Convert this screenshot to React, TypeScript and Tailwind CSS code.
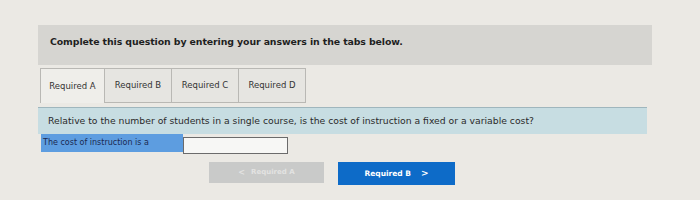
export default function App() {
  const tabs = ["Required A", "Required B", "Required C", "Required D"]
  return (
    <div className="h-[200px] w-[700px] overflow-hidden bg-[#ebe9e4] pt-[25px] font-['DejaVu_Sans',sans-serif] text-[#2b2b2b]">
      <div className="ml-[38px] h-[40px] w-[614px] bg-[#d6d5d1] pl-[12px] pt-[10px]">
        <p className="text-[9.4px] font-bold tracking-[-0.1px] text-[#1f1f1f]">
          Complete this question by entering your answers in the tabs below.
        </p>
      </div>

      <div className="ml-[40px] mt-[3px] flex h-[35px]">
        {tabs.map((t, i) => (
          <div
            key={t}
            className={
              i === 0
                ? "flex w-[65px] items-center justify-center border border-b-0 border-[#b9b8b4] bg-[#efeeea] text-[8.5px] text-[#333]"
                : "flex w-[67px] items-center justify-center border border-l-0 border-[#b9b8b4] bg-[#e6e5e1] text-[8.5px] text-[#333]"
            }
          >
            {t}
          </div>
        ))}
      </div>

      <div className="ml-[38px] mt-[4px] flex h-[27px] w-[609px] items-center border-t border-[#9fb6bd] bg-[#c7dde2] pl-[10px]">
        <p className="text-[9.25px] text-[#2a2a2a]">
          Relative to the number of students in a single course, is the cost of instruction a fixed or a variable cost?
        </p>
      </div>

      <div className="ml-[41px] flex items-start">
        <div className="flex h-[18px] w-[142px] items-center bg-[#5d9de0] pl-[2px] text-[8px] text-[#1b2a52]">
          The cost of instruction is a
        </div>
        <div className="mt-[3px] h-[17px] w-[105px] border border-[#6b6b6b] bg-[#f7f7f5]" />
      </div>

      <div className="mt-[8px] flex gap-[14px] pl-[209px]">
        <button className="flex h-[21px] w-[115px] items-center justify-center gap-[6px] bg-[#c9cac9] text-[7px] font-bold text-[#e3e3e2]">
          <span className="text-[8px]">&lt;</span>
          Required A
        </button>
        <button className="flex h-[23px] w-[117px] items-center justify-center gap-[10px] bg-[#0d6bc8] text-[7.5px] font-bold text-white">
          Required B
          <span className="text-[9px]">&gt;</span>
        </button>
      </div>
    </div>
  )
}
